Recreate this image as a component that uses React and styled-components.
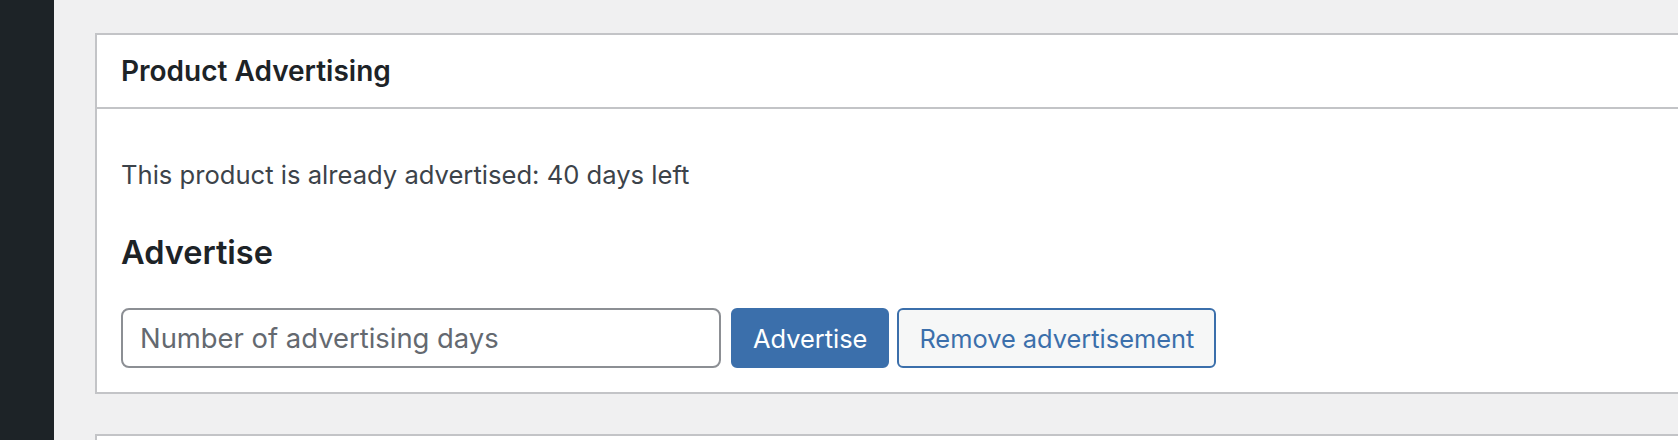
import styled, { createGlobalStyle } from "styled-components";

const GlobalStyle = createGlobalStyle`
    html, body {
        margin: 0;
        padding: 0;
        background: #f0f0f1;
        font-family: Inter, "Noto Sans", sans-serif;
        overflow: hidden;
    }

    * {
        box-sizing: border-box;
    }
`

export default function App () {
    return (
        <>
            <GlobalStyle />
            <Page>
                <Sidebar />
                <Content>
                    <Postbox>
                        <PostboxHeader>
                            <h2>Product Advertising</h2>
                        </PostboxHeader>
                        <Inside>
                            <Notice>This product is already advertised: 40 days left</Notice>
                            <SectionTitle>Advertise</SectionTitle>
                            <FormRow>
                                <DaysInput type="number" placeholder="Number of advertising days" />
                                <Button primary>Advertise</Button>
                                <Button>Remove advertisement</Button>
                            </FormRow>
                        </Inside>
                    </Postbox>
                    <NextPostbox />
                </Content>
            </Page>
        </>
    );
}

const Page = styled.div`
    display: flex;
    width: 100%;
    height: 100vh;
`

const Sidebar = styled.div`
    flex: 0 0 54px;
    background: #1d2327;
`

const Content = styled.div`
    flex: 1;
    display: flex;
    flex-direction: column;
    gap: 40px;
    padding: 33px 0 0 41px;
    min-width: 0;
`

const Postbox = styled.div`
    background: #ffffff;
    border: 2px solid #c3c4c7;
    border-right: none;
`

const NextPostbox = styled(Postbox)`
    flex: 1;
    border-bottom: none;
`

const PostboxHeader = styled.div`
    border-bottom: 2px solid #c3c4c7;
    padding: 16px 24px;

    h2 {
        margin: 0;
        font-size: 28px;
        line-height: 40px;
        font-weight: 600;
        color: #1d2327;
    }
`

const Inside = styled.div`
    padding: 48px 24px 24px;
`

const Notice = styled.p`
    margin: 0;
    font-size: 25.6px;
    line-height: 36.4px;
    color: #3c434a;
`

const SectionTitle = styled.h3`
    margin: 40px 0 35px;
    font-size: 32.5px;
    line-height: 40px;
    font-weight: 600;
    color: #1d2327;
`

const FormRow = styled.div`
    display: flex;
    align-items: center;
`

const DaysInput = styled.input`
    width: 600px;
    height: 60px;
    margin-right: 10px;
    padding: 0 17px;
    border: 2px solid #8c8f94;
    border-radius: 8px;
    font-family: inherit;
    font-size: 27.4px;
    color: #2c3338;
    background: #ffffff;

    &::placeholder {
        color: #646970;
    }
`

const Button = styled.button`
    height: 60px;
    margin-right: 8px;
    padding: 0 20px;
    border: 2px solid #3b6fab;
    border-radius: 6px;
    font-family: inherit;
    font-size: 25.4px;
    background: ${(props) => (props.primary ? "#3b6fab" : "#f6f7f7")};
    color: ${(props) => (props.primary ? "#ffffff" : "#3b6fab")};
    cursor: pointer;
`
